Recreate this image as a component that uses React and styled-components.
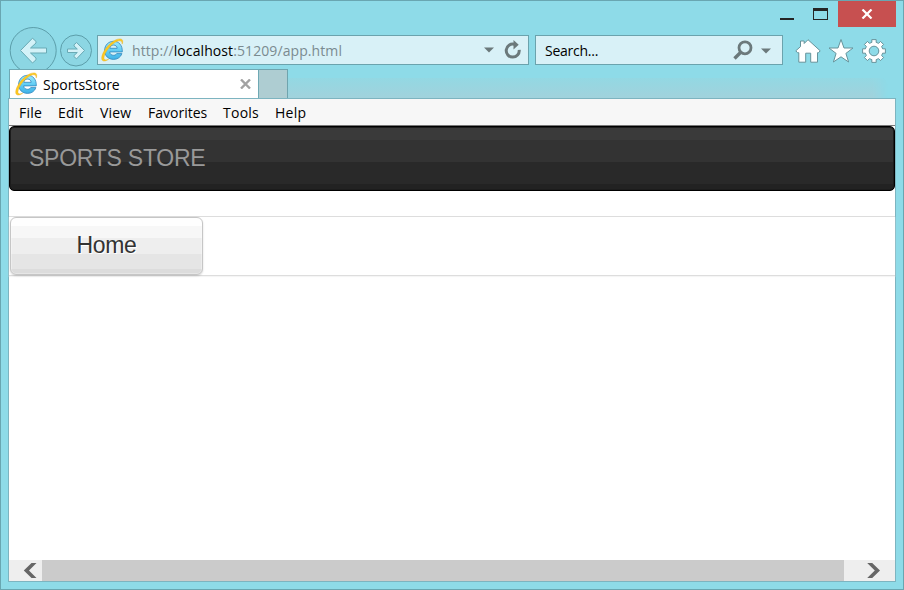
import React from "react";
import styled, { createGlobalStyle } from "styled-components";

const Global = createGlobalStyle`
  * { box-sizing: border-box; }
  body { margin: 0; overflow: hidden; font-family: "Open Sans", "Noto Sans", sans-serif; }
  svg { display: block; flex: none; }
`;

const Window = styled.div`
  width: 904px;
  height: 590px;
  display: flex;
  flex-direction: column;
  background: #8edbe8;
  border: 1px solid #69a6b1;
`;

const TitleBar = styled.div`
  height: 34px;
  display: flex;
  justify-content: flex-end;
  padding-right: 7px;
`;

const CloseButton = styled.div`
  width: 58px;
  height: 26px;
  margin-left: 9px;
  background: #c75050;
  display: flex;
  align-items: center;
  justify-content: center;
`;

const NavBar = styled.div`
  height: 34px;
  display: flex;
  align-items: flex-start;
  padding-left: 8px;
`;

const BackButton = styled.div`
  margin: -9px 2px 0 0;
`;

const ForwardButton = styled.div`
  margin: -1px 4px 0 0;
`;

const Field = styled.div`
  width: ${(p) => p.$width}px;
  height: 30px;
  margin-right: 6px;
  padding-left: ${(p) => p.$pad}px;
  display: flex;
  align-items: center;
  background: #d8f1f7;
  border: 1px solid #6ba3ad;
`;

const Label = styled.span`
  font-size: 14px;
  line-height: 20px;
  color: ${(p) => p.$color || "#000"};
  letter-spacing: ${(p) => p.$spacing || 0}px;
  white-space: nowrap;
`;

const Url = styled(Label)`
  flex: 1;
  margin-left: 8px;
  padding-top: 2px;
  b { font-weight: 400; color: #000; }
`;

const SearchText = styled(Label)`
  flex: 1;
  padding-top: 2px;
`;

const Tools = styled.div`
  display: flex;
  margin: 3px 0 0 6px;
  gap: 7px;
`;

const TabStrip = styled.div`
  position: relative;
  height: 29px;
  display: flex;
  margin: 0 8px 0 8px;
`;

const Tab = styled.div`
  width: 250px;
  display: flex;
  align-items: center;
  padding: 0 6px 0 5px;
  gap: 5px;
  background: #fff;
  border: 1px solid #6fa9b4;
  border-bottom: 0;
`;

const TabTitle = styled(Label)`
  flex: 1;
  padding-top: 2px;
`;

const NewTab = styled.div`
  width: 29px;
  background: #aecdd2;
  border: 1px solid #6fa4ae;
  border-width: 1px 1px 0 0;
`;

const TabShade = styled.div`
  width: 600px;
  height: 20px;
  margin-top: 9px;
  background: linear-gradient(#93d8e3, #a1d2dc);
  mask-image: linear-gradient(to right, #000 585px, transparent 600px);
  border-radius: 0 8px 0 0;
`;

const Viewport = styled.div`
  width: 888px;
  height: 484px;
  margin-left: 7px;
  display: flex;
  flex-direction: column;
  background: #fff;
  border: 1px solid #7db4c0;
`;

const MenuBar = styled.div`
  height: 27px;
  display: flex;
  align-items: center;
  padding: 2px 0 0 10px;
  background: #f7f7f7;
  border-bottom: 1px solid #777;
`;

const MenuItem = styled(Label)`
  width: ${(p) => p.$width}px;
`;

const Page = styled.div`
  flex: 1;
  font-family: "Liberation Sans", Arial, sans-serif;
`;

const Brand = styled.div`
  height: 65px;
  padding-left: 19px;
  border: 1px solid #000;
  border-radius: 5px;
  background: linear-gradient(#3a3a3a 13px, #333 13px 35px, #292929 35px 57px, #222 57px);
  box-shadow: inset 0 0 0 1px #1c1c1c;
  color: #999;
  font-size: 23px;
  line-height: 62px;
  letter-spacing: -0.25px;
`;

const ButtonBar = styled.div`
  height: 60px;
  margin-top: 25px;
  padding-left: 1px;
  border: solid #ddd;
  border-width: 1px 0;
  box-shadow: 0 1px 1px #f5f5f5;
`;

const HomeButton = styled.div`
  width: 193px;
  height: 58px;
  border: 1px solid #c6c6c6;
  border-radius: 6px;
  background: linear-gradient(#fefefe 8px, #f7f7f7 8px 20px, #eee 20px 36px, #e5e5e5 36px 51px, #dcdcdc 51px);
  box-shadow: inset 0 0 0 1px rgba(255, 255, 255, 0.3), 0 1px 2px rgba(0, 0, 0, 0.15);
  color: #333;
  font-size: 23px;
  line-height: 55px;
  text-align: center;
  text-shadow: 1px 1px 0 #fff;
  letter-spacing: -0.3px;
`;

const ScrollBar = styled.div`
  height: 21px;
  display: flex;
  background: #eee;
`;

const ScrollArrow = styled.div`
  width: ${(p) => p.$width}px;
  padding: 3px 0 0 ${(p) => p.$pad}px;
`;

const Thumb = styled.div`
  width: 802px;
  background: #cbcbcb;
`;

const WindowGlyphs = () => (
  <svg width="49" height="26" shapeRendering="crispEdges">
    <rect x="0" y="17" width="14" height="2" fill="#252525" />
    <path d="M33 7h15v12h-15z M34 10v8h13v-8z" fill="#252525" fillRule="evenodd" />
  </svg>
);

const IELogo = () => (
  <svg width="23" height="24" viewBox="0 0 23 24">
    <defs>
      <linearGradient id="ieBlue" x1="0" y1="0" x2="0" y2="1">
        <stop offset="0" stopColor="#9feafc" />
        <stop offset=".5" stopColor="#62cdf4" />
        <stop offset="1" stopColor="#3fb2e6" />
      </linearGradient>
    </defs>
    <path
      d="M21.3 13.9H8.7c.2 2.3 1.7 3.4 3.8 3.4 1.5 0 2.5-.6 3.2-1.7h5.2c-1.1 3.5-4.3 5.8-8.3 5.8-5.3 0-9-3.6-9-8.9 0-5.2 3.8-9.2 9-9.2 5.4 0 9 4.1 8.7 10.6zM8.8 10.3h7.4c-.2-2.1-1.6-3.2-3.6-3.2-2.1 0-3.5 1.1-3.8 3.2z"
      fill="url(#ieBlue)" stroke="#3187bd" strokeWidth=".8" />
    <path
      d="M21.2 6.1C22.3 3.2 21.8 1 19.3.9 16 .6 10.7 3.4 6.5 8.3 2.1 13.4-.3 19.4 1.1 22c1.1 1.8 3.8 1.1 6.6-.8-2.3.9-4 1-4.5-.1-1-2 1.2-6.9 4.8-11.3C12 5.1 16.7 2.4 19.1 2.8c1.5.2 2 1.5 2.1 3.3z"
      fill="#fdc921" stroke="#e8ac1c" strokeWidth=".4" />
  </svg>
);

const DownArrow = () => (
  <svg width="10" height="6"><path d="M0 .5h10L5 5.5z" fill="#6b797b" /></svg>
);

const Reload = styled.svg`margin: 0 6px 0 10px;`;
const Magnifier = styled.svg`margin-right: 8px;`;
const SearchArrow = styled.div`margin: 2px 11px 0 0;`;
const TabClose = styled.svg`margin-right: 1px;`;

const gear = Array.from({ length: 8 }, (_, i) => {
  const rot = (r, deg) => {
    const a = ((i * 45 + deg) * Math.PI) / 180;
    return `${(13 + r * Math.sin(a)).toFixed(2)} ${(13 - r * Math.cos(a)).toFixed(2)}`;
  };
  return `${i ? "L" : "M"}${rot(8.9, -14)}L${rot(11.6, -11)}L${rot(11.6, 11)}L${rot(8.9, 14)}`;
}).join("") + "Z";

const menu = [
  ["File", 39, 0.25], ["Edit", 42, 0.1], ["View", 48, 0.15],
  ["Favorites", 75, 0], ["Tools", 52, 0.25], ["Help", 50, 0.3],
];

export default function App() {
  return (
    <Window>
      <Global />
      <TitleBar>
        <WindowGlyphs />
        <CloseButton>
          <svg width="12" height="10"><path d="M1.5 .5l9 9M10.5 .5l-9 9" stroke="#fff" strokeWidth="2.2" /></svg>
        </CloseButton>
      </TitleBar>
      <NavBar>
        <BackButton>
          <svg width="48" height="48">
            <circle cx="24.2" cy="24.5" r="23" fill="#8cd6e3" stroke="#5c9eaa" />
            <path d="M11.5 24.5 23.5 12.2 27 15.4V17L21.5 22H37.5v5H21.5L27 32v1.8L23.5 37z" fill="#d3f2f8" stroke="#69aab5" strokeLinejoin="round" />
          </svg>
        </BackButton>
        <ForwardButton>
          <svg width="34" height="34">
            <circle cx="17" cy="16.5" r="15.5" fill="#8cd6e3" stroke="#5c9eaa" />
            <path d="M25.5 16.5 17.6 8.5 15 10.8V12L18.3 15H8.5v3.5h9.8L15 21.5v1.2l2.6 2.1z" fill="#d3f2f8" stroke="#69aab5" strokeLinejoin="round" />
          </svg>
        </ForwardButton>
        <Field $width={432} $pad={3}>
          <IELogo />
          <Url $color="#7b8b90" $spacing={0.09}>http://<b>localhost</b>:51209/app.html</Url>
          <DownArrow />
          <Reload width="18" height="20">
            <path d="M10.3 4.3a6.5 6.5 0 1 0 4.9 5.6" fill="none" stroke="#6b797b" strokeWidth="3" />
            <path d="M9.5 0l5.2 4.8-5.2 4.8z" fill="#6b797b" />
          </Reload>
        </Field>
        <Field $width={248} $pad={9}>
          <SearchText $spacing={-0.25}>Search...</SearchText>
          <Magnifier width="20" height="20">
            <circle cx="12" cy="7.8" r="6" fill="none" stroke="#6b797b" strokeWidth="2.8" />
            <path d="M7.5 12.5 1.5 18.5" stroke="#6b797b" strokeWidth="3.3" />
          </Magnifier>
          <SearchArrow><DownArrow /></SearchArrow>
        </Field>
        <Tools>
          <svg width="26" height="26">
            <path d="M.8 12.8 5.5 8.6V3h3.7v2.5L13 1.7l12.2 11.1-1.7 1.9H22.5v9.5h-6.8v-9h-5v9H3.8v-9.5H2.5z" fill="#fff" stroke="#66939b" strokeLinejoin="round" />
          </svg>
          <svg width="26" height="26">
            <path d="M13 1.5 16 10h9l-7.1 5.4L20.6 24 13 18.8 5.4 24l2.7-8.6L1 10h9z" fill="#fff" stroke="#66939b" strokeLinejoin="round" />
          </svg>
          <svg width="26" height="26">
            <path d={gear} fill="#fff" stroke="#66939b" strokeLinejoin="round" />
            <circle cx="13" cy="13" r="4.8" fill="#8edbe8" stroke="#66939b" />
          </svg>
        </Tools>
      </NavBar>
      <TabStrip>
        <Tab>
          <IELogo />
          <TabTitle $spacing={0}>SportsStore</TabTitle>
          <TabClose width="11" height="10"><path d="M1 .5l9 9M10 .5l-9 9" stroke="#a2a2a2" strokeWidth="2.4" /></TabClose>
        </Tab>
        <NewTab />
        <TabShade />
      </TabStrip>
      <Viewport>
        <MenuBar>
          {menu.map(([name, width, spacing]) => (
            <MenuItem key={name} $width={width} $spacing={spacing}>{name}</MenuItem>
          ))}
        </MenuBar>
        <Page>
          <Brand>SPORTS STORE</Brand>
          <ButtonBar><HomeButton>Home</HomeButton></ButtonBar>
        </Page>
        <ScrollBar>
          <ScrollArrow $width={33} $pad={14}>
            <svg width="14" height="15"><path d="M8.5 0H13.5L6 7.5 13.5 15H8.5L.8 7.5z" fill="#666" /></svg>
          </ScrollArrow>
          <Thumb />
          <ScrollArrow $width={51} $pad={23}>
            <svg width="14" height="15"><path d="M5.2 0H.2L7.8 7.5 .2 15H5.2L13 7.5z" fill="#666" /></svg>
          </ScrollArrow>
        </ScrollBar>
      </Viewport>
    </Window>
  );
}
